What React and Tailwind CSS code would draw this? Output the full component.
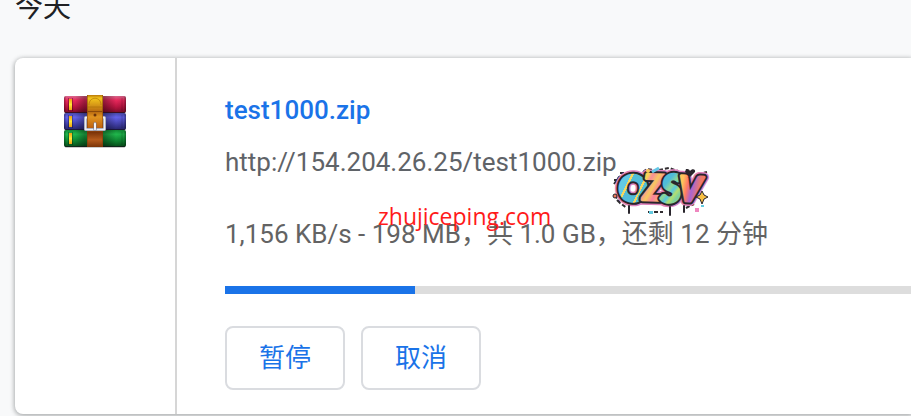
const download = {
    name: "test1000.zip",
    url: "http://154.204.26.25/test1000.zip",
    status: "1,156 KB/s - 198 MB，共 1.0 GB，还剩 12 分钟",
    percent: 27.7,
};

const books = [
    { y: 1, id: "red", stops: ["#d8688c", "#e8285c", "#b81440", "#780c28"] },
    { y: 18, id: "blue", stops: ["#4848a8", "#6462ec", "#4240a8", "#26246a"] },
    { y: 35, id: "green", stops: ["#128a35", "#20b84c", "#0d8430", "#064a18"] },
];

function ArchiveIcon() {
    return (
        <svg width="64" height="56" viewBox="0 0 64 56" aria-hidden="true">
            <defs>
                {books.map((book) => (
                    <linearGradient key={book.id} id={book.id} x1="0" y1="0" x2="0" y2="1">
                        <stop offset="0" stopColor={book.stops[0]} />
                        <stop offset="0.25" stopColor={book.stops[1]} />
                        <stop offset="0.65" stopColor={book.stops[2]} />
                        <stop offset="1" stopColor={book.stops[3]} />
                    </linearGradient>
                ))}
                <linearGradient id="shade" x1="0" y1="0" x2="1" y2="0">
                    <stop offset="0" stopColor="#000" stopOpacity="0.35" />
                    <stop offset="0.04" stopColor="#000" stopOpacity="0" />
                    <stop offset="0.18" stopColor="#000" stopOpacity="0" />
                    <stop offset="0.33" stopColor="#000" stopOpacity="0.3" />
                    <stop offset="0.64" stopColor="#000" stopOpacity="0.35" />
                    <stop offset="0.84" stopColor="#000" stopOpacity="0" />
                    <stop offset="0.96" stopColor="#000" stopOpacity="0.1" />
                    <stop offset="1" stopColor="#000" stopOpacity="0.4" />
                </linearGradient>
                <linearGradient id="gold" x1="0" y1="0" x2="0" y2="1">
                    <stop offset="0" stopColor="#f0a010" />
                    <stop offset="0.5" stopColor="#ffe838" />
                    <stop offset="1" stopColor="#f0a010" />
                </linearGradient>
                <linearGradient id="strap" x1="0" y1="0" x2="0" y2="1">
                    <stop offset="0" stopColor="#b87808" />
                    <stop offset="0.06" stopColor="#f4c51c" />
                    <stop offset="0.2" stopColor="#d49517" />
                    <stop offset="0.32" stopColor="#b8690f" />
                    <stop offset="0.42" stopColor="#e09420" />
                    <stop offset="0.62" stopColor="#c06410" />
                    <stop offset="0.72" stopColor="#7c340a" />
                    <stop offset="0.86" stopColor="#b45a1c" />
                    <stop offset="1" stopColor="#7a3408" />
                </linearGradient>
            </defs>
            <rect x="2" y="51" width="60" height="2" rx="1" fill="#000" opacity="0.2" />
            {books.map((book) => (
                <g key={book.id}>
                    <rect x="1" y={book.y} width="62" height="17" rx="2" fill={`url(#${book.id})`} />
                    <rect x="1" y={book.y} width="62" height="17" rx="2" fill="url(#shade)" />
                    <path d={`M2 ${book.y + 16.5}h60`} stroke="#16101c" opacity="0.6" />
                    <path d={`M5.5 ${book.y + 2}v13M9.5 ${book.y + 2}v13`} stroke="#000" opacity="0.3" />
                    <rect x="6" y={book.y + 3} width="3" height="11" fill="url(#gold)" />
                    <path d={`M59 ${book.y + 2}v13`} stroke="#000" opacity="0.15" />
                </g>
            ))}
            <rect x="24" y="0" width="16" height="52" fill="url(#strap)" />
            <path d="M24.5 0v52M39.5 0v52" stroke="#7a3c08" opacity="0.5" />
            <path d="M26 10c0-9 12-9 12 0M25 12h14" fill="none" stroke="#a86c08" opacity="0.6" />
            <path d="M25 16.5h14" stroke="#8c4a0a" />
            <circle cx="32" cy="20" r="1.5" fill="#6c340a" />
            <path d="M24 22.5h-1.5v12h19v-12h-1.5" fill="none" stroke="#6c7088" strokeWidth="3" strokeLinejoin="round" />
            <path d="M24 22.5h-1.5v12h19v-12h-1.5" fill="none" stroke="#eceef4" strokeWidth="2" strokeLinejoin="round" />
            <path d="M32 28.5v6" stroke="#6c7088" strokeWidth="3" strokeLinecap="round" />
            <path d="M32 28.5v6" stroke="#f4f4f8" strokeWidth="2" strokeLinecap="round" />
        </svg>
    );
}

const graffiti = [
    { char: "O", x: 22, y: 35, size: 35, slant: "normal", fill: "url(#paintO)", turn: "rotate(4 22 22)" },
    { char: "Z", x: 42, y: 34, size: 35, slant: "italic", fill: "url(#paintZ)", turn: "rotate(2 42 22)" },
    { char: "S", x: 60, y: 36, size: 38, slant: "italic", fill: "url(#paintS)", turn: "rotate(2 60 22)" },
    { char: "V", x: 79, y: 35, size: 34, slant: "italic", fill: "url(#paintV)", turn: "rotate(4 79 22)" },
];

function GraffitiLetter({ letter, stroke, strokeWidth }) {
    return (
        <text
            x={letter.x}
            y={letter.y}
            fontSize={letter.size}
            fontStyle={letter.slant}
            textAnchor="middle"
            transform={letter.turn}
            fill={stroke}
            stroke={stroke}
            strokeWidth={strokeWidth}
            strokeLinejoin="round"
        >
            {letter.char}
        </text>
    );
}

function GraffitiLogo() {
    return (
        <svg width="100" height="52" viewBox="0 0 100 52" role="img" aria-label="OZSV" className="absolute top-[166px] left-[611px] overflow-visible">
            <defs>
                <linearGradient id="paintO" x1="0" y1="0.2" x2="1" y2="0.8">
                    <stop offset="0.3" stopColor="#62cae4" />
                    <stop offset="0.3" stopColor="#f4d860" />
                    <stop offset="0.36" stopColor="#f4d860" />
                    <stop offset="0.36" stopColor="#52bcd8" />
                    <stop offset="0.68" stopColor="#52bcd8" />
                    <stop offset="0.68" stopColor="#f4d860" />
                    <stop offset="0.74" stopColor="#f4d860" />
                    <stop offset="0.74" stopColor="#52bcd8" />
                </linearGradient>
                <linearGradient id="paintZ" x1="0" y1="0" x2="1" y2="1">
                    <stop offset="0.25" stopColor="#f8d358" />
                    <stop offset="0.35" stopColor="#f98f98" />
                    <stop offset="0.5" stopColor="#f8c860" />
                    <stop offset="0.65" stopColor="#f77fa0" />
                    <stop offset="0.8" stopColor="#f8b868" />
                </linearGradient>
                <linearGradient id="paintS" x1="0.2" y1="0" x2="0.8" y2="1">
                    <stop offset="0.35" stopColor="#50bcd8" />
                    <stop offset="0.5" stopColor="#8fd894" />
                    <stop offset="0.6" stopColor="#58c6de" />
                    <stop offset="0.7" stopColor="#b2df70" />
                    <stop offset="0.8" stopColor="#7ed09c" />
                </linearGradient>
                <linearGradient id="paintV" x1="0" y1="0" x2="1" y2="0.2">
                    <stop offset="0.2" stopColor="#ffc45c" />
                    <stop offset="0.4" stopColor="#ff7a64" />
                    <stop offset="0.6" stopColor="#a964d0" />
                    <stop offset="0.9" stopColor="#ef7a68" />
                </linearGradient>
            </defs>
            <path d="M3 18l5-7 10-5M4 29l5 8 7 5M32 6l4-3 7 1M48 4l10-2 9 3M87 8l9-2M3 14h4M9 7h4M6 34l3 3M37 46h15M75 42l8-4" fill="none" stroke="#302c30" strokeWidth="2" strokeDasharray="4 2" />
            <g fontFamily="Lato, sans-serif" fontWeight="900">
                {graffiti.map((letter) => (
                    <GraffitiLetter key={letter.char} letter={letter} stroke="#df83bd" strokeWidth={10} />
                ))}
                {graffiti.map((letter) => (
                    <g key={letter.char}>
                        <GraffitiLetter letter={letter} stroke="#29252c" strokeWidth={7} />
                        <GraffitiLetter letter={letter} stroke={letter.fill} strokeWidth={3} />
                    </g>
                ))}
            </g>
            <path d="M18 40v7M59 41v8M73 40v6" stroke="#29252c" strokeWidth="2" strokeLinecap="round" />
            <path d="M41 6l7-4" stroke="#65c7e6" strokeWidth="3" />
            <path d="M75 3c2 0 3 0 4 2 2-3 6-2 5 1l-5 5-5-5z" fill="#29252c" />
            <circle cx="37" cy="5" r="2" fill="#f7cc55" />
            <circle cx="4" cy="30" r="2" fill="#e9785c" stroke="#29252c" />
            <path d="M91 25l2 4 4 2-4 2-2 5-2-5-4-2 4-2z" fill="#f8bf43" stroke="#29252c" />
            <path d="M38 45h4v3h-4zM90 39h3v2h-3z" fill="#62cae0" />
            <path d="M84 42h4v4h-4z" fill="#ef87bf" />
        </svg>
    );
}

function ActionButton({ children }) {
    return (
        <button
            type="button"
            className="flex h-16 w-[120px] items-center justify-center rounded-lg border-2 border-[#dadce0] bg-white text-[26px] leading-8 text-[#1a73e8]"
        >
            {children}
        </button>
    );
}

export default function App() {
    return (
        <div className="relative overflow-hidden bg-[#f8f9fa] pb-0.5 pl-[15px] font-['Roboto','Noto_Sans_CJK_SC',sans-serif]">
            <h2 className="-mt-2 mb-[34px] text-[28px] leading-8 text-[#202124]">今天</h2>

            <section className="flex rounded-l-lg bg-white shadow-[0_1px_4px_1px_rgba(60,64,67,0.4)]">
                <div className="flex w-[162px] shrink-0 justify-center border-r-2 border-[#d6d6d6] pt-[37px]">
                    <ArchiveIcon />
                </div>

                <div className="min-w-0 flex-1 pt-9 pb-6 pl-12 text-[26px] leading-8 text-[#5f6368]">
                    <a href="#" className="block font-medium text-[#1a73e8]">
                        {download.name}
                    </a>
                    <a href="#" className="mt-5 block">
                        {download.url}
                    </a>
                    <p className="mt-10 whitespace-nowrap text-[#636363]">{download.status}</p>

                    <div
                        role="progressbar"
                        aria-label={download.name}
                        aria-valuenow={download.percent}
                        className="mt-9 h-2 bg-[#dddddd]"
                    >
                        <div className="h-full bg-[#1a73e8]" style={{ width: `${download.percent}%` }} />
                    </div>

                    <div className="mt-8 flex gap-4">
                        <ActionButton>暂停</ActionButton>
                        <ActionButton>取消</ActionButton>
                    </div>
                </div>
            </section>

            <span className="absolute top-[200px] left-[378px] font-['Comic_Sans_MS','Open_Sans',sans-serif] text-[23px] leading-8 font-medium text-[#ff1a1a]">
                zhujiceping.com
            </span>
            <GraffitiLogo />
        </div>
    );
}
